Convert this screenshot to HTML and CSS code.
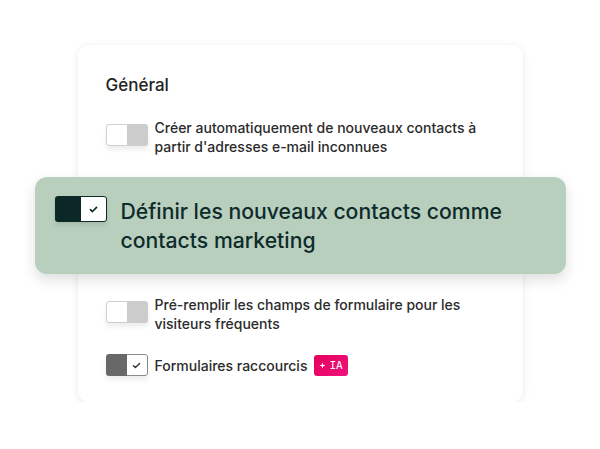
FILE: index.html
```html
<!DOCTYPE html>
<html lang="fr">
<head>
<meta charset="utf-8">
<title>Général</title>
<link rel="stylesheet" href="styles.css">
</head>
<body>
<div class="card">
  <h2 class="title">Général</h2>

  <div class="row">
    <span class="toggle toggle-off"><span class="knob"></span><span class="track"></span></span>
    <p class="label">Créer automatiquement de nouveaux contacts à partir d'adresses e-mail inconnues</p>
  </div>

  <div class="highlight">
    <span class="toggle toggle-big"><span class="track"></span><span class="knob"><svg viewBox="0 0 10 8" class="check"><path d="M1.5 4.2 L3.8 6.3 L8.5 1.6" /></svg></span></span>
    <p class="label label-big">Définir les nouveaux contacts comme contacts marketing</p>
  </div>

  <div class="row">
    <span class="toggle toggle-off"><span class="knob"></span><span class="track"></span></span>
    <p class="label">Pré-remplir les champs de formulaire pour les visiteurs fréquents</p>
  </div>

  <div class="row row-last">
    <span class="toggle toggle-on"><span class="track"></span><span class="knob"><svg viewBox="0 0 10 8" class="check"><path d="M1.5 4.2 L3.8 6.3 L8.5 1.6" /></svg></span></span>
    <p class="label">Formulaires raccourcis</p>
    <span class="badge"><svg viewBox="0 0 10 10" class="spark"><path d="M5 0.5 L6 4 L9.5 5 L6 6 L5 9.5 L4 6 L0.5 5 L4 4 Z" /></svg>IA</span>
  </div>
</div>
</body>
</html>
```

FILE: styles.css
```css
* { box-sizing: border-box; }

body {
  margin: 0;
  background: #ffffff;
  font-family: "Inter", "Open Sans", "Liberation Sans", sans-serif;
  color: #2b2b2b;
}

.card {
  width: 445px;
  margin: 45px auto 0;
  padding: 28px 28px 26px;
  background: #ffffff;
  border-radius: 10px;
  box-shadow: 0 2px 10px rgba(0, 0, 0, 0.07), 0 0 2px rgba(0, 0, 0, 0.05);
}

.title {
  margin: 0 0 21px;
  font-size: 17px;
  line-height: 24px;
  font-weight: 500;
  color: #222;
}

.row {
  display: flex;
  align-items: flex-start;
  gap: 7px;
  margin-bottom: 21px;
}

.row-last {
  align-items: center;
  margin-bottom: 0;
}

.label {
  margin: 0;
  font-size: 14px;
  line-height: 19px;
  font-weight: 500;
  color: #2b2b2b;
}

.toggle {
  flex: none;
  display: flex;
  width: 42px;
  height: 22px;
  border-radius: 3px;
  overflow: hidden;
  box-shadow: 0 4px 5px rgba(0, 0, 0, 0.07);
}

.row .toggle { margin-top: 6px; }
.row-last .toggle { margin-top: 0; }

.toggle .knob, .toggle .track {
  width: 50%;
  height: 100%;
  display: flex;
  align-items: center;
  justify-content: center;
}

.toggle-off .knob {
  background: #fff;
  border: 1px solid #cfcfcf;
  border-right: none;
  border-radius: 3px 0 0 3px;
}
.toggle-off .track { background: #cdcccc; }

.toggle-on .track { background: #696868; }
.toggle-on .knob {
  background: #fff;
  border: 1px solid #8a8a8a;
  border-left: none;
  border-radius: 0 3px 3px 0;
}

.check {
  width: 9px;
  height: 7px;
  fill: none;
  stroke: #333;
  stroke-width: 1.6;
  stroke-linecap: round;
  stroke-linejoin: round;
}

.highlight {
  display: flex;
  align-items: flex-start;
  gap: 14px;
  margin: 0 -71px 21px;
  padding: 19px 20px 19px;
  background: #b9cfbe;
  border-radius: 12px;
  box-shadow: 0 6px 14px rgba(0, 0, 0, 0.13);
}

.toggle-big {
  width: 52px;
  height: 26px;
  border-radius: 3px;
  box-shadow: 0 3px 4px rgba(0, 0, 0, 0.1);
}
.toggle-big .track { background: #0b2827; }
.toggle-big .knob {
  background: #fff;
  border: 1px solid #0b2827;
  border-left: none;
  border-radius: 0 3px 3px 0;
}
.toggle-big .check { stroke: #0b2827; stroke-width: 1.9; }

.label-big {
  margin-top: 1px;
  font-size: 21.2px;
  line-height: 29px;
  font-weight: 500;
  color: #0d2b2a;
}

.badge {
  display: inline-flex;
  align-items: center;
  gap: 3px;
  height: 21px;
  padding: 0 5px;
  border-radius: 3px;
  background: linear-gradient(135deg, #e4005c, #f0137e);
  color: #fff;
  font-family: "DejaVu Sans Mono", monospace;
  font-size: 11px;
}

.spark {
  width: 7px;
  height: 7px;
  fill: #fff;
}
```
